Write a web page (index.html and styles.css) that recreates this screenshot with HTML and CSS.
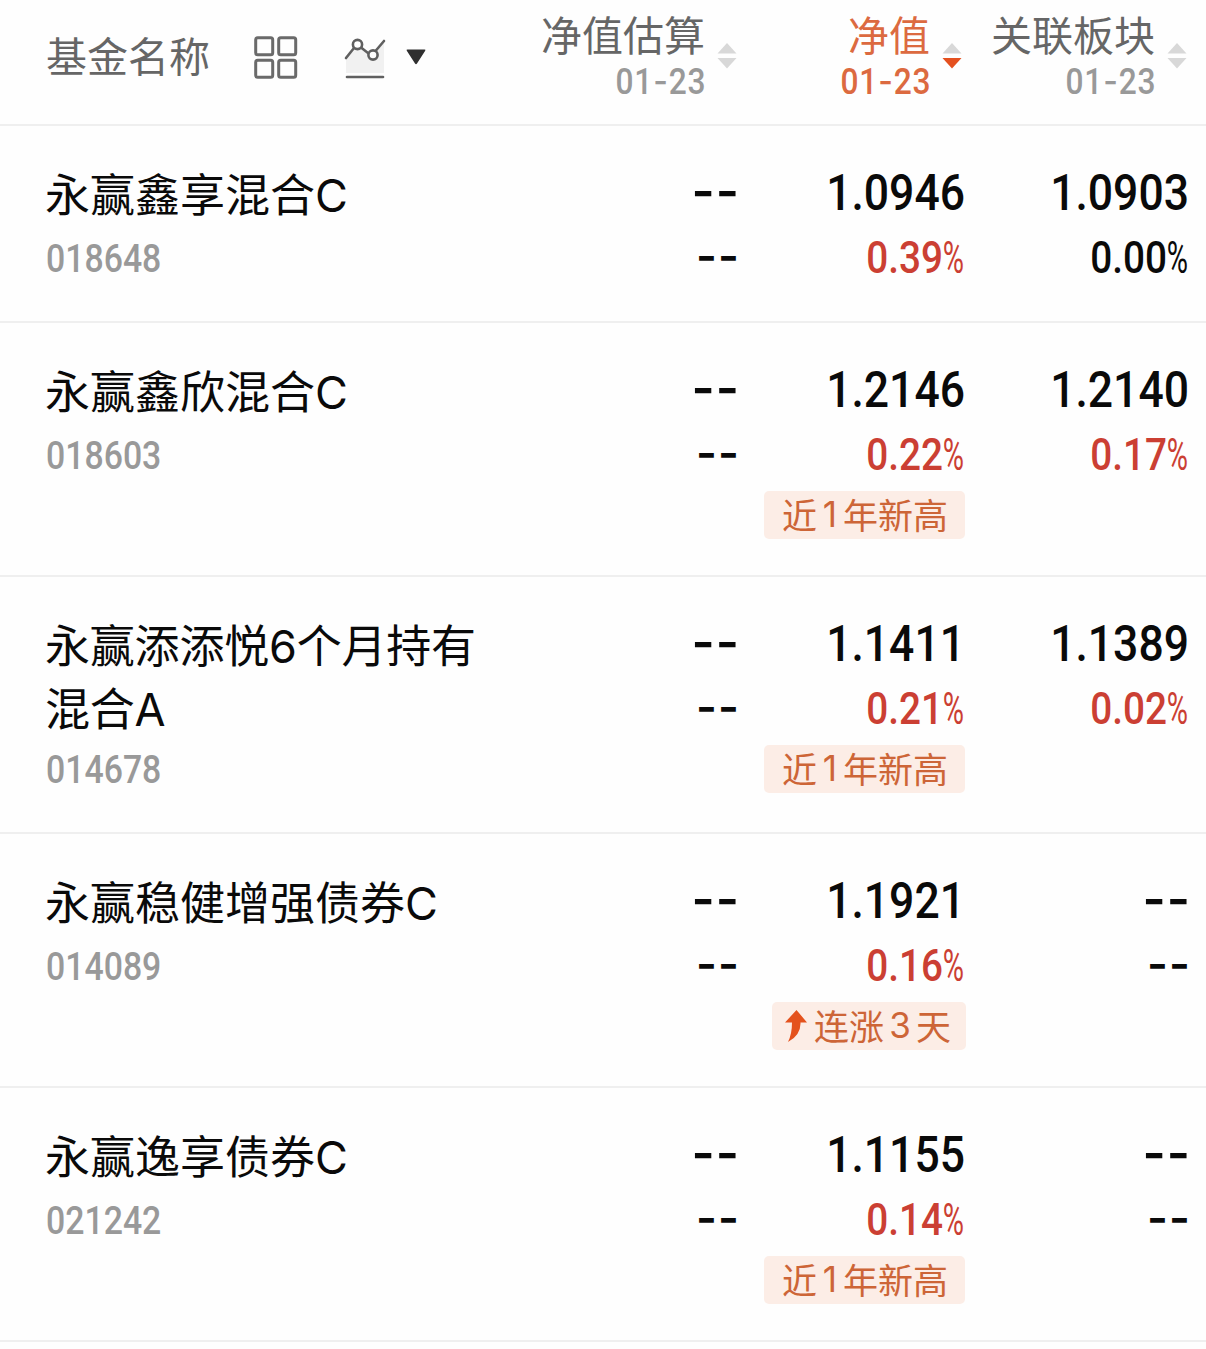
FILE: index.html
```html
<!DOCTYPE html>
<html lang="zh-CN">
<head>
<meta charset="utf-8">
<title>基金列表</title>
<link rel="stylesheet" href="styles.css">
</head>
<body>
<main class="funds">
  <header class="head">
    <div class="head-name">
      <span>基金名称</span>
      <svg class="icon-grid" width="44" height="44" viewBox="0 0 44 44" fill="none" stroke="#6a6a6a" stroke-width="3"><rect x="1.7" y="1.7" width="17" height="17" rx="2"/><rect x="24.7" y="1.7" width="17" height="17" rx="2"/><rect x="1.7" y="24.2" width="17" height="17" rx="2"/><rect x="24.7" y="24.2" width="17" height="17" rx="2"/></svg>
      <svg class="icon-chart" width="42" height="42" viewBox="0 0 42 42" fill="none" stroke="#606060" stroke-width="2.6" stroke-linecap="round"><path d="M2 20 13 8l15 10L40 5v30H2z" fill="#f1f1f1" stroke="none"/><path d="M2 20 10 10M17 9.500l7 5.500M31.500 13 40 3"/><circle cx="13.500" cy="6.500" r="4.600" fill="#fff"/><circle cx="29" cy="17" r="4.600" fill="#fff"/><path d="M3 39h36"/></svg>
      <svg class="icon-drop" width="20" height="16" viewBox="0 0 20 16"><path d="M1.500.5h17q1.500 0 .7 1.200L11 14.500q-1 1.300-2 0L.8 1.700Q0 .5 1.500.5z" fill="#2f2f2f"/></svg>
    </div>
    <div class="head-col">
      <div class="head-text"><span>净值估算</span><span class="date">01<i>-</i>23</span></div>
      <svg class="sort" width="20" height="26" viewBox="0 0 20 26" fill="#d8d8d8"><path d="M10 0 19.500 10.500H.5z"/><path d="M10 25.500.5 15h19z"/></svg>
    </div>
    <div class="head-col active">
      <div class="head-text"><span>净值</span><span class="date">01<i>-</i>23</span></div>
      <svg class="sort" width="20" height="26" viewBox="0 0 20 26" fill="#d8d8d8"><path d="M10 0 19.500 10.500H.5z"/><path d="M10 25.500.5 15h19z" fill="#e4501f"/></svg>
    </div>
    <div class="head-col sector">
      <div class="head-text"><span>关联板块</span><span class="date">01<i>-</i>23</span></div>
      <svg class="sort" width="20" height="26" viewBox="0 0 20 26" fill="#d8d8d8"><path d="M10 0 19.500 10.500H.5z"/><path d="M10 25.500.5 15h19z"/></svg>
    </div>
  </header>

  <section class="row">
    <div class="fund"><div class="name">永赢鑫享混合C</div><div class="code">018648</div></div>
    <div class="cell"><div class="none">--</div><div class="none small">--</div></div>
    <div class="cell"><div class="value">1.0946</div><div class="rate up">0.39<b>%</b></div></div>
    <div class="cell"><div class="value">1.0903</div><div class="rate">0.00<b>%</b></div></div>
  </section>

  <section class="row">
    <div class="fund"><div class="name">永赢鑫欣混合C</div><div class="code">018603</div></div>
    <div class="cell"><div class="none">--</div><div class="none small">--</div></div>
    <div class="cell"><div class="value">1.2146</div><div class="rate up">0.22<b>%</b></div><div class="tag">近<span class="num">1</span>年新高</div></div>
    <div class="cell"><div class="value">1.2140</div><div class="rate up">0.17<b>%</b></div></div>
  </section>

  <section class="row">
    <div class="fund two-line"><div class="name">永赢添添悦6个月持有混合A</div><div class="code">014678</div></div>
    <div class="cell"><div class="none">--</div><div class="none small">--</div></div>
    <div class="cell"><div class="value">1.1411</div><div class="rate up">0.21<b>%</b></div><div class="tag">近<span class="num">1</span>年新高</div></div>
    <div class="cell"><div class="value">1.1389</div><div class="rate up">0.02<b>%</b></div></div>
  </section>

  <section class="row">
    <div class="fund"><div class="name">永赢稳健增强债券C</div><div class="code">014089</div></div>
    <div class="cell"><div class="none">--</div><div class="none small">--</div></div>
    <div class="cell"><div class="value">1.1921</div><div class="rate up">0.16<b>%</b></div><div class="tag streak"><svg width="24" height="34" viewBox="0 0 24 34"><path d="M12.500 1 23 13.500h-6.500Q17 26 4 33q4-8 4-19.500H1z" fill="#e4521d"/></svg>连涨<span class="num">3</span>天</div></div>
    <div class="cell"><div class="none">--</div><div class="none small">--</div></div>
  </section>

  <section class="row">
    <div class="fund"><div class="name">永赢逸享债券C</div><div class="code">021242</div></div>
    <div class="cell"><div class="none">--</div><div class="none small">--</div></div>
    <div class="cell"><div class="value">1.1155</div><div class="rate up">0.14<b>%</b></div><div class="tag">近<span class="num">1</span>年新高</div></div>
    <div class="cell"><div class="none">--</div><div class="none small">--</div></div>
  </section>
</main>
</body>
</html>
```
FILE: styles.css
```css
* { box-sizing: border-box; }
body {
  margin: 0;
  background: #fefefe;
  color: #0a0a0a;
  font-family: Inter, "Noto Sans CJK SC", sans-serif;
}
.funds { width: 1206px; height: 1349px; overflow: hidden; }
.head, .row {
  display: grid;
  grid-template-columns: 454px 238px 227px 224px;
  padding-left: 46px;
  border-bottom: 2px solid #efefef;
}
.head {
  height: 126px;
  color: #666;
  font-size: 41px;
}
.head-name { display: flex; align-items: flex-start; padding-top: 36px; }
.head-name span { margin-top: 1px; line-height: 41px; }
.icon-grid { margin-left: 44px; }
.icon-chart { margin: 2px 0 0 46px; }
.icon-drop { margin: 13px 0 0 20px; }
.head-col { display: flex; justify-content: flex-end; padding: 13px 1px 0 0; }
.head-col.active { padding-right: 3px; }
.head-col.sector { padding-right: 2px; }
.head-text { display: flex; flex-direction: column; align-items: flex-end; line-height: 46px; }
.sort { margin: 30px 0 0 12px; }
.date {
  margin-top: -1px;
  margin-right: -1px;
  color: #999;
  font: 500 36px/46px Roboto, sans-serif;
  letter-spacing: 1px;
  transform: scaleX(.88);
  transform-origin: right;
}
.date i { font-family: Inter, sans-serif; font-style: normal; }
.active, .active .date { color: #dc6a40; }
.row { padding-top: 36px; padding-bottom: 36px; }
.fund { padding-top: 2px; }
.name { width: 440px; margin-left: -1px; font-size: 45px; line-height: 63px; }
.two-line .name { letter-spacing: -.2px; }
.code {
  width: max-content;
  margin-top: 6px;
  color: #999;
  font: 500 38px/52px Roboto, sans-serif;
  transform: scaleX(.89);
  transform-origin: left;
}
.two-line .code { margin-top: 3px; }
.cell { display: flex; flex-direction: column; align-items: flex-end; }
.value, .rate {
  font-family: Roboto, sans-serif;
  font-weight: 500;
  transform-origin: right;
}
.value {
  font-size: 50px;
  line-height: 63px;
  transform: scaleX(.89);
}
.rate {
  margin-top: 6px;
  font-size: 45px;
  line-height: 54px;
  transform: scaleX(.86);
}
.rate b { display: inline-block; width: 26px; font-weight: 400; transform: scaleX(.75); transform-origin: left; }
.up { color: #cb3f33; }
.none {
  margin: 0 -2px 4px 0;
  font-size: 50px;
  font-weight: 600;
  line-height: 59px;
  letter-spacing: 1px;
}
.none.small {
  margin: 4px -2px 2px 0;
  font-size: 45px;
  line-height: 54px;
}
.tag {
  display: flex;
  align-items: center;
  height: 48px;
  margin-top: 9px;
  padding: 0 17px 3px 18px;
  border-radius: 5px;
  background: #fcede6;
  color: #cd6537;
  font-size: 35px;
}
.num { width: 26px; text-align: center; }
.streak { margin-right: -1px; padding: 0 15px 3px 12px; }
.streak svg { margin: 3px 6px 0 0; }
.streak .num { width: 32px; }
```
